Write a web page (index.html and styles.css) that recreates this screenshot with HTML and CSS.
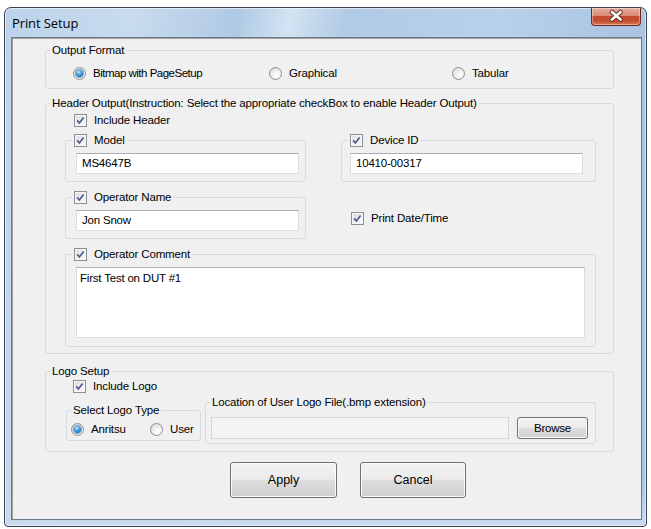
FILE: index.html
```html
<!DOCTYPE html>
<html lang="en">
<head>
    <meta charset="UTF-8">
    <title>Print Setup</title>
    <link rel="stylesheet" href="styles.css">
</head>
<body>
    <div class="window">
        <div class="titlebar">
            <span class="title">Print Setup</span>
            <div class="close">
                <svg viewBox="0 0 50 18" width="50" height="18">
                    <path class="x-shadow" d="M21 5 L29.5 12.5 M29.5 5 L21 12.5"/>
                    <path class="x-mark" d="M21 5 L29.5 12.5 M29.5 5 L21 12.5"/>
                </svg>
            </div>
        </div>

        <div class="client">
            <fieldset class="group output">
                <legend>Output Format</legend>
                <div class="radio-row">
                    <label class="opt w-bitmap"><span class="radio on"></span><span class="tight">Bitmap with PageSetup</span></label>
                    <label class="opt w-graph"><span class="radio"></span>Graphical</label>
                    <label class="opt"><span class="radio"></span>Tabular</label>
                </div>
            </fieldset>

            <fieldset class="group header">
                <legend>Header Output(Instruction: Select the appropriate checkBox to enable Header Output)</legend>
                <div class="header-body">
                    <label class="opt include"><span class="check"><svg viewBox="0 0 11 11"><path d="M2.2 5.4 L4.4 8 L8.6 2.4"/></svg></span>Include Header</label>

                    <div class="fields">
                        <fieldset class="group sub">
                            <legend><span class="check"><svg viewBox="0 0 11 11"><path d="M2.2 5.4 L4.4 8 L8.6 2.4"/></svg></span>Model</legend>
                            <div class="sub-body model"><div class="textbox">MS4647B</div></div>
                        </fieldset>
                        <fieldset class="group sub">
                            <legend><span class="check"><svg viewBox="0 0 11 11"><path d="M2.2 5.4 L4.4 8 L8.6 2.4"/></svg></span>Device ID</legend>
                            <div class="sub-body device"><div class="textbox">10410-00317</div></div>
                        </fieldset>
                        <fieldset class="group sub">
                            <legend><span class="check"><svg viewBox="0 0 11 11"><path d="M2.2 5.4 L4.4 8 L8.6 2.4"/></svg></span>Operator Name</legend>
                            <div class="sub-body model"><div class="textbox">Jon Snow</div></div>
                        </fieldset>
                        <div class="datetime">
                            <label class="opt"><span class="check"><svg viewBox="0 0 11 11"><path d="M2.2 5.4 L4.4 8 L8.6 2.4"/></svg></span>Print Date/Time</label>
                        </div>
                        <fieldset class="group sub comment">
                            <legend><span class="check"><svg viewBox="0 0 11 11"><path d="M2.2 5.4 L4.4 8 L8.6 2.4"/></svg></span>Operator Comment</legend>
                            <div class="sub-body comment-body"><div class="textarea">First Test on DUT #1</div></div>
                        </fieldset>
                    </div>
                </div>
            </fieldset>

            <fieldset class="group logo">
                <legend>Logo Setup</legend>
                <div class="logo-body">
                    <label class="opt include-logo"><span class="check"><svg viewBox="0 0 11 11"><path d="M2.2 5.4 L4.4 8 L8.6 2.4"/></svg></span>Include Logo</label>
                    <div class="logo-row">
                        <fieldset class="group logo-type">
                            <legend>Select Logo Type</legend>
                            <div class="type-row">
                                <label class="opt w-anritsu"><span class="radio on"></span>Anritsu</label>
                                <label class="opt"><span class="radio"></span>User</label>
                            </div>
                        </fieldset>
                        <fieldset class="group location">
                            <legend>Location of User Logo File(.bmp extension)</legend>
                            <div class="location-row">
                                <div class="textbox disabled"></div>
                                <button class="btn browse">Browse</button>
                            </div>
                        </fieldset>
                    </div>
                </div>
            </fieldset>

            <div class="actions">
                <button class="btn big">Apply</button>
                <button class="btn big cancel">Cancel</button>
            </div>
        </div>
    </div>
</body>
</html>
```

FILE: styles.css
```css
* { box-sizing: border-box; }

body {
    margin: 0;
    padding: 7px 0 0 4px;
    background: #fff;
    font: 11.5px/16px "Liberation Sans", Arial, sans-serif;
    letter-spacing: -0.15px;
    color: #000;
}

/* window frame */

.window {
    width: 643px;
    height: 520px;
    border: 1px solid #3a4350;
    border-radius: 7px 7px 4px 4px;
    padding: 0 4px 6px 6px;
    background:
        linear-gradient(to bottom, transparent 90%, #c8dbef 100%),
        linear-gradient(100deg, #bcd3ea 0%, #c8dbee 18%, #afc9e4 32%, #d3e3f2 39%, #b1cae5 47%, #b9d0e9 68%, #abc5e2 85%, #a6c2e0 100%);
    box-shadow: inset 0 0 0 1px rgba(255, 255, 255, .55);
}

.titlebar {
    height: 29px;
    display: flex;
    justify-content: space-between;
    align-items: flex-start;
}

.title {
    padding-left: 1px;
    font: 13px/30px "Open Sans", "Liberation Sans", sans-serif;
    letter-spacing: -0.1px;
}

.close {
    width: 50px;
    height: 18px;
    margin-right: 1px;
    border: 1px solid #6b2a1d;
    border-top: 0;
    border-radius: 0 0 4px 4px;
    background: linear-gradient(to bottom, #e6ad9d 0%, #d88a74 45%, #c4492c 50%, #c75232 80%, #d9805f 100%);
    box-shadow: inset 0 0 0 1px rgba(255, 255, 255, .35);
}

.close svg { display: block; margin: -1px 0 0 -1px; }

.x-shadow { fill: none; stroke: #5c2418; stroke-width: 4.6; stroke-linecap: round; }
.x-mark { fill: none; stroke: #fff; stroke-width: 2.8; stroke-linecap: round; }

.client {
    height: 483px;
    padding: 6px 27px 0 33px;
    background: #f0f0f0;
    border: 1px solid #6c7a89;
    box-shadow: inset 1px 1px 0 #a0a0a0;
}

/* group boxes */

.group {
    margin: 0;
    padding: 0;
    min-width: 0;
    border: 1px solid #d5dbe0;
    border-radius: 3px;
}

.group > legend {
    display: flex;
    align-items: center;
    padding: 0 2px;
    margin-left: 4px;
    line-height: 13px;
}

.opt {
    display: flex;
    align-items: center;
    gap: 7px;
    height: 16px;
    white-space: nowrap;
}

.tight { letter-spacing: -0.5px; }

.group > legend .check { margin-right: 7px; }

.check {
    flex: none;
    width: 13px;
    height: 13px;
    border: 1px solid #8e8f8f;
    background: linear-gradient(135deg, #d9dadb 0%, #eeeeee 50%, #fbfbfb 100%);
    box-shadow: inset 0 0 0 1px #f6f6f6;
}

.check svg { display: block; width: 11px; height: 11px; }
.check path { fill: none; stroke: #4c5b8f; stroke-width: 1.7; }

.radio {
    flex: none;
    display: flex;
    align-items: center;
    justify-content: center;
    width: 13px;
    height: 13px;
    border-radius: 50%;
    border: 1px solid #8e8f8f;
    background: radial-gradient(circle at 65% 70%, #fff 0%, #eaeaea 55%, #d2d2d2 100%);
}

.radio.on::after {
    content: "";
    width: 7px;
    height: 7px;
    border-radius: 50%;
    background: radial-gradient(circle at 40% 30%, #bfe4fb 0%, #3d9ada 45%, #135da6 100%);
    box-shadow: 0 0 0 1px #6f9cc4;
}

/* output format */

.radio-row {
    display: flex;
    padding: 8px 0 7px 27px;
}

.w-bitmap { width: 196px; }
.w-graph { width: 183px; }

/* header output */

.header { margin-top: 8px; }

.header-body { padding: 2px 17px 6px 19px; }

.include { margin-left: 9px; }

.fields {
    display: grid;
    grid-template-columns: 241px 255px;
    column-gap: 35px;
    row-gap: 9px;
    margin-top: 6px;
}

.sub > legend { margin-left: 6px; }

.sub-body { padding: 6px 6px 7px 10px; }
.sub-body.device { padding: 6px 12px 7px 8px; }

.textbox {
    height: 21px;
    padding: 0 5px;
    line-height: 19px;
    font-size: 11.5px;
    letter-spacing: -0.2px;
    background: #fff;
    border: 1px solid #dadde2;
    border-top-color: #abadb3;
}

.datetime { padding: 19px 0 0 10px; }

.comment { grid-column: 1 / -1; }

.comment-body { padding: 6px 10px 8px 10px; }

.textarea {
    height: 71px;
    padding: 2px 3px;
    letter-spacing: -0.2px;
    background: #fff;
    border: 1px solid #dadde2;
    border-top-color: #abadb3;
}

/* logo setup */

.logo { margin-top: 11px; }

.logo-body { padding: 0 17px 7px 20px; }

.include-logo { margin-left: 7px; }

.logo-row {
    display: flex;
    align-items: flex-start;
    gap: 4px;
    margin-top: 2px;
}

.logo-type {
    width: 135px;
    margin-top: 8px;
}

.type-row {
    display: flex;
    padding: 4px 0 3px 4px;
}

.w-anritsu { width: 79px; }

.location { flex: 1; }

.location-row {
    display: flex;
    align-items: center;
    gap: 8px;
    padding: 8px 7px 4px 5px;
}

.textbox.disabled {
    width: 298px;
    height: 22px;
    background: #f4f4f4;
    border-color: #d5d5d5;
}

/* buttons */

.btn {
    font: 11.5px "Liberation Sans", Arial, sans-serif;
    letter-spacing: -0.2px;
    color: #000;
    border: 1px solid #707070;
    border-radius: 3px;
    background: linear-gradient(to bottom, #f2f2f2 0%, #ebebeb 48%, #dddddd 52%, #cfcfcf 100%);
    box-shadow: inset 0 0 0 1px #fbfbfb;
    padding: 0;
}

.browse {
    width: 71px;
    height: 22px;
    margin-top: -1px;
}

.actions {
    display: flex;
    gap: 23px;
    margin-top: 10px;
    padding-left: 185px;
}

.big {
    width: 107px;
    height: 36px;
    font-size: 12.5px;
    letter-spacing: 0;
}

.cancel { width: 106px; }
```
